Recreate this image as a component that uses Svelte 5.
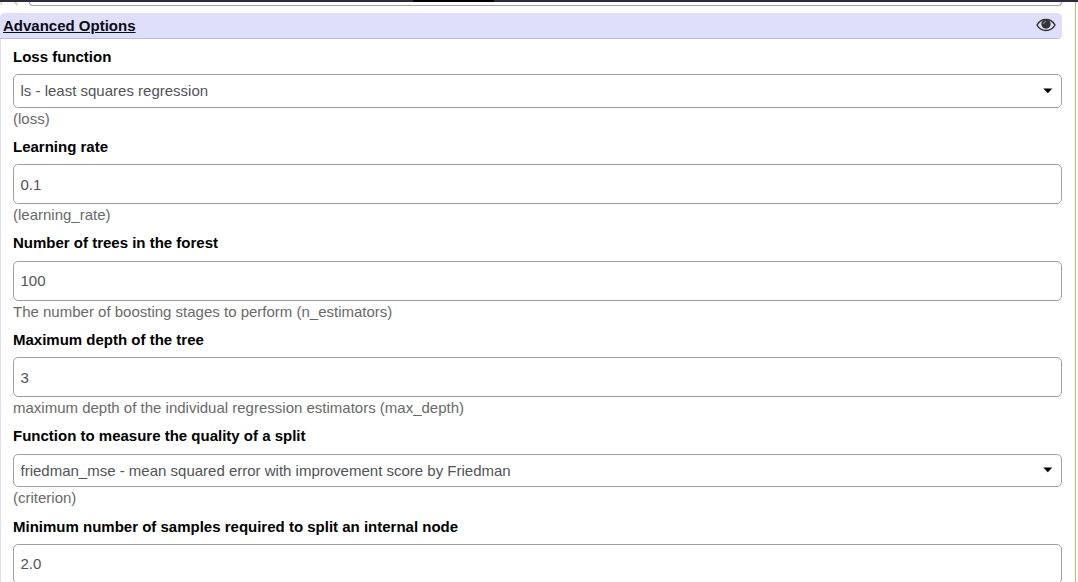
<script>
  const fields = [
    { label: 'Loss function', value: 'ls - least squares regression', help: '(loss)', select: true },
    { label: 'Learning rate', value: '0.1', help: '(learning_rate)' },
    { label: 'Number of trees in the forest', value: '100', help: 'The number of boosting stages to perform (n_estimators)' },
    { label: 'Maximum depth of the tree', value: '3', help: 'maximum depth of the individual regression estimators (max_depth)' },
    { label: 'Function to measure the quality of a split', value: 'friedman_mse - mean squared error with improvement score by Friedman', help: '(criterion)', select: true },
    { label: 'Minimum number of samples required to split an internal node', value: '2.0', help: '' }
  ];
</script>

<div class="page">
  <div class="topbar"><div class="active"></div></div>
  <div class="previous">
    <svg class="marks" width="20" height="4" viewBox="0 0 20 4"><path d="M0 0h1.5l.8 3.5H1zM13.5 0h3l2 3.5h-2z" fill="#ecd5a0" /></svg>
    <div class="prevbox"></div>
  </div>
  <section class="panel">
    <header>
      <span class="title">Advanced Options</span>
      <svg class="eye" width="20" height="14" viewBox="0 0 20 14">
        <path d="M1 7C3 3.3 6.3 1.4 10 1.4S17 3.3 19 7C17 10.7 13.7 12.4 10 12.4S3 10.7 1 7Z" fill="none" stroke="#343434" stroke-width="1.5" />
        <circle cx="10" cy="6" r="4.7" fill="#343434" />
        <path d="M7.6 5.6Q7.8 3.8 9.6 3.5" fill="none" stroke="#aaaabc" stroke-width=".9" stroke-linecap="round" />
      </svg>
    </header>
    <div class="body">
      {#each fields as f}
        <div class="field" class:choice={f.select}>
          <div class="label">{f.label}</div>
          <div class="control" class:select={f.select}>
            <span>{f.value}</span>
            {#if f.select}
              <svg class="caret" width="10" height="6" viewBox="0 0 10 6"><path d="M.3.5H9.3L4.8 5.3Z" fill="#000" /></svg>
            {/if}
          </div>
          <div class="help">{f.help}</div>
        </div>
      {/each}
    </div>
  </section>
</div>

<style>
  :global(body) { margin: 0; background: #fff; overflow: hidden; }
  .page {
    box-sizing: border-box;
    width: 1078px;
    height: 582px;
    overflow: hidden;
    display: flex;
    flex-direction: column;
    font: 15px/22.5px "Liberation Sans", Arial, sans-serif;
    background: linear-gradient(#d3b068, #d3b068) 1075px 0 / 1px 100% no-repeat #fff;
  }
  .topbar { height: 2px; flex: none; background: #2c2c40; }
  .active { width: 81px; height: 2px; margin-left: 413px; background: #000; }
  .previous { height: 11px; flex: none; display: flex; align-items: flex-start; }
  .marks { display: block; width: 20px; margin-right: 9px; }
  .prevbox {
    box-sizing: border-box;
    width: 1033px;
    height: 4px;
    border: solid #a0a0a0;
    border-width: 0 1px 1px;
    border-radius: 0 0 4px 4px;
  }
  .panel { box-sizing: border-box; width: 1062px; flex: none; border-left: 1px solid #dfdffc; border-radius: 5px; }
  header {
    box-sizing: border-box;
    height: 26px;
    margin-left: -1px;
    padding: 0 6px 0 3px;
    display: flex;
    justify-content: space-between;
    align-items: center;
    background: #dfdffc;
    border-bottom: 1px solid #b5b5f3;
    border-radius: 5px 5px 5px 0;
  }
  .title { padding-top: 2px; font-weight: bold; text-decoration: underline; color: #0b0b12; }
  .eye { display: block; margin-bottom: 1px; }
  .body { padding: 6.6px 0 0 12px; }
  .field { margin-bottom: 5.5px; }
  .choice { margin-bottom: 5.8px; }
  .label { font-weight: bold; color: #000; margin-bottom: 6px; }
  .control {
    box-sizing: border-box;
    height: 40px;
    padding: 1px 9px 0 6.5px;
    display: flex;
    align-items: center;
    justify-content: space-between;
    border: 1px solid #a0a0a0;
    border-radius: 5px;
    color: #505357;
  }
  .select { height: 33.5px; padding: .4px 8.5px 0 6.5px; }
  .caret { display: block; margin-bottom: 1px; }
  .help { color: #696969; min-height: 22.5px; }
</style>
